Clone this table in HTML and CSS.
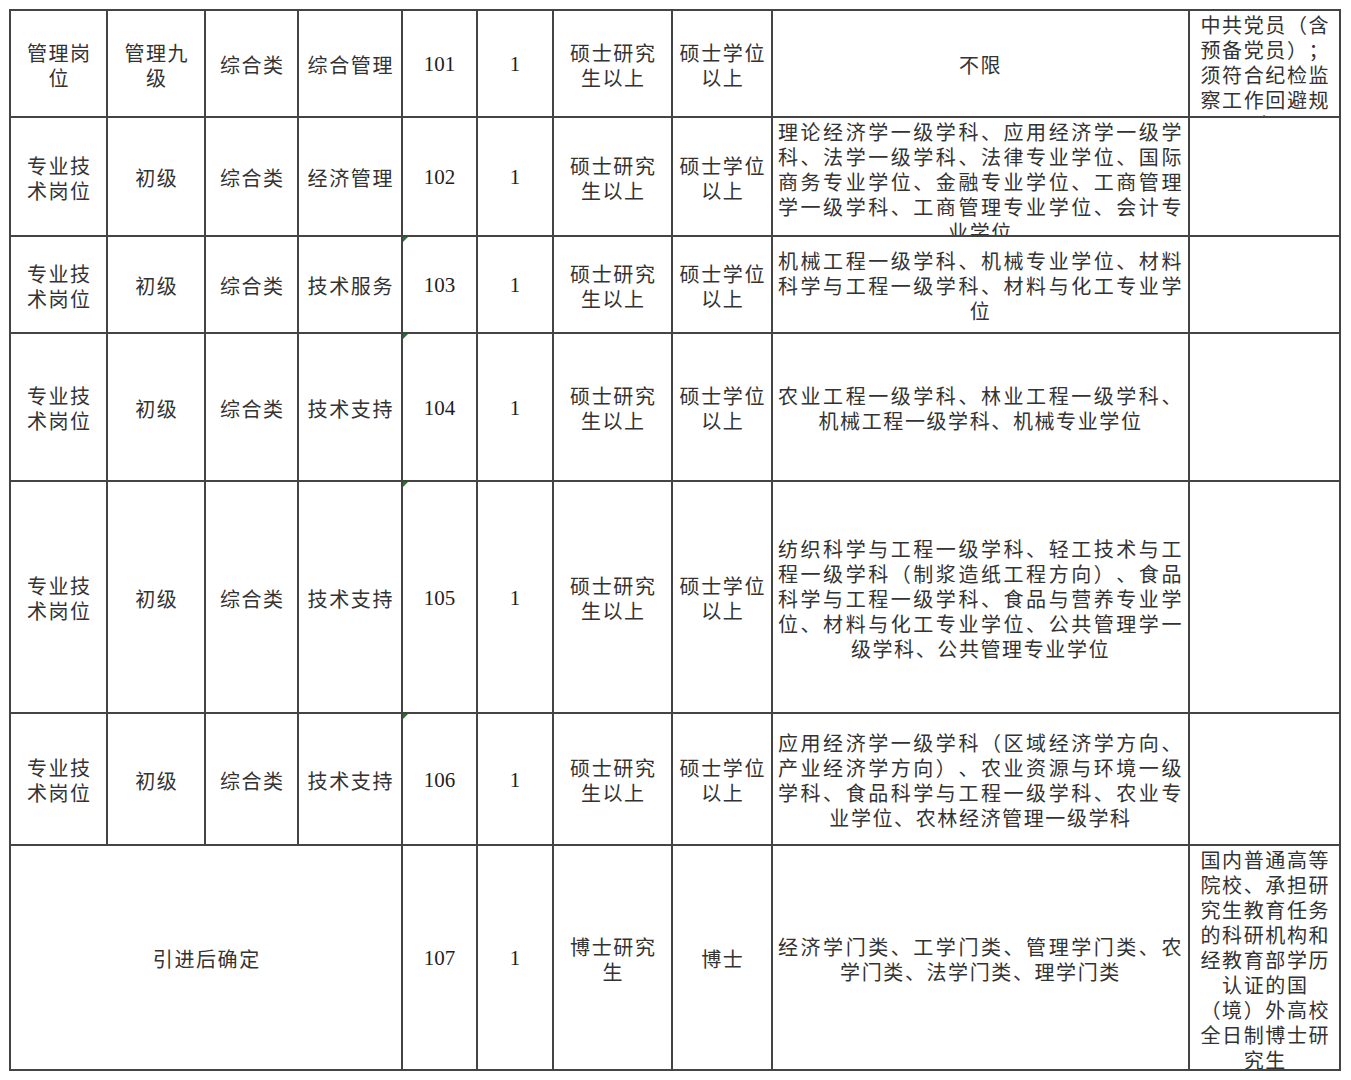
FILE: index.html
```html
<!DOCTYPE html>
<html lang="zh-CN">
<head>
<meta charset="utf-8">
<title>岗位表</title>
<link rel="stylesheet" href="styles.css">
</head>
<body>
<div class="sheet">
  <!-- row 101 -->
  <div class="c"><p class="t">管理岗<br>位</p></div>
  <div class="c"><p class="t">管理九<br>级</p></div>
  <div class="c"><p class="t">综合类</p></div>
  <div class="c"><p class="t">综合管理</p></div>
  <div class="c num"><p class="t">101</p></div>
  <div class="c num"><p class="t">1</p></div>
  <div class="c"><p class="t">硕士研究<br>生以上</p></div>
  <div class="c"><p class="t">硕士学位<br>以上</p></div>
  <div class="c major"><p class="t">不限</p></div>
  <div class="c note"><p class="t">中共党员（含<br>预备党员）；<br>须符合纪检监<br>察工作回避规<br>定</p></div>

  <!-- row 102 -->
  <div class="c"><p class="t">专业技<br>术岗位</p></div>
  <div class="c"><p class="t">初级</p></div>
  <div class="c"><p class="t">综合类</p></div>
  <div class="c"><p class="t">经济管理</p></div>
  <div class="c num"><p class="t">102</p></div>
  <div class="c num"><p class="t">1</p></div>
  <div class="c"><p class="t">硕士研究<br>生以上</p></div>
  <div class="c"><p class="t">硕士学位<br>以上</p></div>
  <div class="c major"><p class="t">理论经济学一级学科、应用经济学一级学科、法学一级学科、法律专业学位、国际商务专业学位、金融专业学位、工商管理学一级学科、工商管理专业学位、会计专业学位</p></div>
  <div class="c note"></div>

  <!-- row 103 -->
  <div class="c"><p class="t">专业技<br>术岗位</p></div>
  <div class="c"><p class="t">初级</p></div>
  <div class="c"><p class="t">综合类</p></div>
  <div class="c"><p class="t">技术服务</p></div>
  <div class="c num flag"><p class="t">103</p></div>
  <div class="c num"><p class="t">1</p></div>
  <div class="c"><p class="t">硕士研究<br>生以上</p></div>
  <div class="c"><p class="t">硕士学位<br>以上</p></div>
  <div class="c major"><p class="t">机械工程一级学科、机械专业学位、材料科学与工程一级学科、材料与化工专业学位</p></div>
  <div class="c note"></div>

  <!-- row 104 -->
  <div class="c"><p class="t">专业技<br>术岗位</p></div>
  <div class="c"><p class="t">初级</p></div>
  <div class="c"><p class="t">综合类</p></div>
  <div class="c"><p class="t">技术支持</p></div>
  <div class="c num flag"><p class="t">104</p></div>
  <div class="c num"><p class="t">1</p></div>
  <div class="c"><p class="t">硕士研究<br>生以上</p></div>
  <div class="c"><p class="t">硕士学位<br>以上</p></div>
  <div class="c major"><p class="t">农业工程一级学科、林业工程一级学科、机械工程一级学科、机械专业学位</p></div>
  <div class="c note"></div>

  <!-- row 105 -->
  <div class="c"><p class="t">专业技<br>术岗位</p></div>
  <div class="c"><p class="t">初级</p></div>
  <div class="c"><p class="t">综合类</p></div>
  <div class="c"><p class="t">技术支持</p></div>
  <div class="c num flag"><p class="t">105</p></div>
  <div class="c num"><p class="t">1</p></div>
  <div class="c"><p class="t">硕士研究<br>生以上</p></div>
  <div class="c"><p class="t">硕士学位<br>以上</p></div>
  <div class="c major"><p class="t">纺织科学与工程一级学科、轻工技术与工程一级学科（制浆造纸工程方向）、食品科学与工程一级学科、食品与营养专业学位、材料与化工专业学位、公共管理学一级学科、公共管理专业学位</p></div>
  <div class="c note"></div>

  <!-- row 106 -->
  <div class="c"><p class="t">专业技<br>术岗位</p></div>
  <div class="c"><p class="t">初级</p></div>
  <div class="c"><p class="t">综合类</p></div>
  <div class="c"><p class="t">技术支持</p></div>
  <div class="c num flag"><p class="t">106</p></div>
  <div class="c num"><p class="t">1</p></div>
  <div class="c"><p class="t">硕士研究<br>生以上</p></div>
  <div class="c"><p class="t">硕士学位<br>以上</p></div>
  <div class="c major"><p class="t">应用经济学一级学科（区域经济学方向、产业经济学方向）、农业资源与环境一级学科、食品科学与工程一级学科、农业专业学位、农林经济管理一级学科</p></div>
  <div class="c note"></div>

  <!-- row 107 -->
  <div class="c span4"><p class="t">引进后确定</p></div>
  <div class="c num"><p class="t">107</p></div>
  <div class="c num"><p class="t">1</p></div>
  <div class="c"><p class="t">博士研究<br>生</p></div>
  <div class="c"><p class="t">博士</p></div>
  <div class="c major"><p class="t">经济学门类、工学门类、管理学门类、农学门类、法学门类、理学门类</p></div>
  <div class="c note"><p class="t">国内普通高等<br>院校、承担研<br>究生教育任务<br>的科研机构和<br>经教育部学历<br>认证的国<br>（境）外高校<br>全日制博士研<br>究生</p></div>
</div>
</body>
</html>
```

FILE: styles.css
```css
html, body {
  margin: 0;
  padding: 0;
  background: #ffffff;
}

body {
  font-family: "Noto Sans CJK SC", "Noto Sans", sans-serif;
  color: #333333;
  text-spacing-trim: space-all;
  font-kerning: none;
}

.sheet {
  margin: 9px 0 0 9px;
  width: 1332px;
  display: grid;
  grid-template-columns: 95px 96px 91px 102px 73px 74px 117px 98px 415px 149px;
  grid-template-rows: 105px 117px 95px 146px 230px 130px 223px;
  gap: 2px;
  padding: 2px;
  box-sizing: border-box;
  background: #444444;
}

.c {
  position: relative;
  background: #ffffff;
  display: flex;
  flex-direction: column;
  justify-content: safe center;
  overflow: hidden;
  padding: 0 5px;
  text-align: center;
  font-size: 20px;
  line-height: 25px;
  letter-spacing: 1.6px;
}

.t {
  margin: 0;
  padding-left: 1.6px;
  position: relative;
  top: 1px;
}

.num {
  font-family: "Liberation Serif", "Times New Roman", serif;
  font-size: 21px;
  letter-spacing: 0;
  color: #1e1e1e;
}

.num .t {
  padding-left: 0;
}

.major .t {
  text-align: justify;
  text-align-last: center;
  padding-left: 0;
}

.note .t {
  text-align: center;
}

.span4 {
  grid-column: span 4;
}

.flag::before {
  content: "";
  position: absolute;
  left: 0;
  top: 0;
  border-top: 5px solid #1f7a2c;
  border-right: 5px solid transparent;
}
```
